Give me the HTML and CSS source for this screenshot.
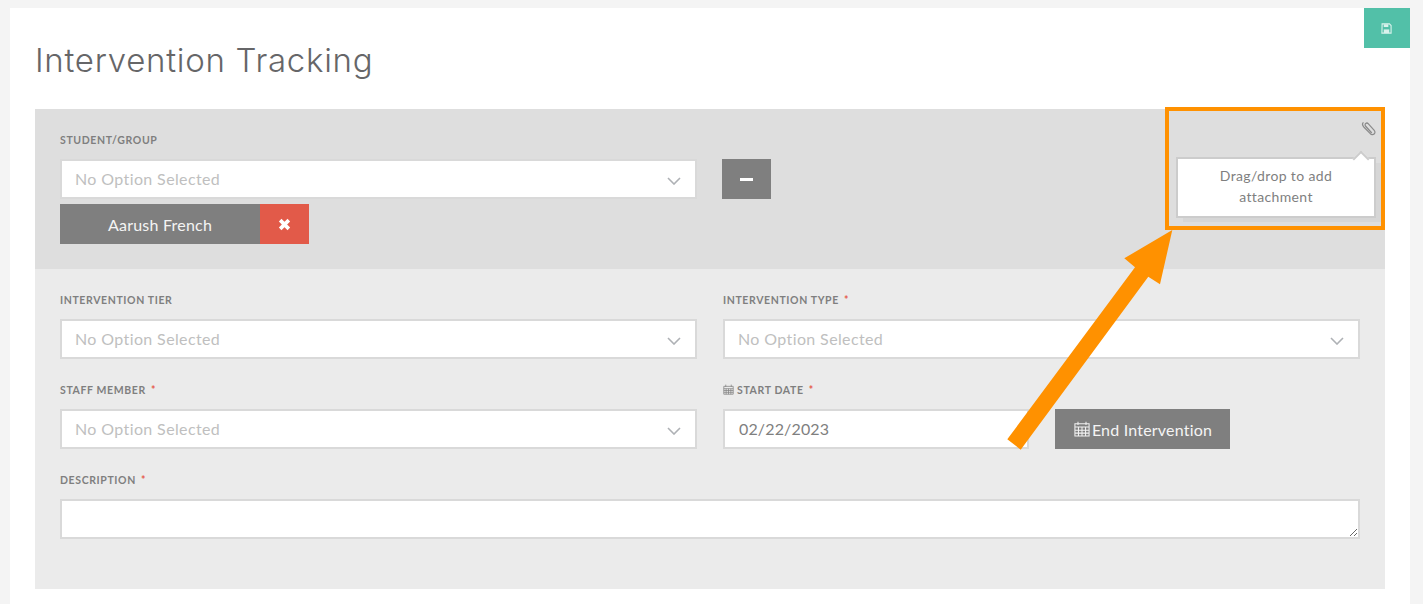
FILE: index.html
```html
<!DOCTYPE html>
<html lang="en">
<head>
<meta charset="utf-8">
<title>Intervention Tracking</title>
<link rel="stylesheet" href="styles.css">
</head>
<body>
<main class="card">
  <button class="save" type="button" aria-label="Save">
    <svg class="save-icon" viewBox="0 0 12 12"><path d="M1.2 1h8l1.8 1.8v8.2H1z" fill="none" stroke="#d9f2ec" stroke-width="1.2"/><path d="M3 1.400h5v3H3z" fill="#d9f2ec"/><path d="M3 7h6v4H3z" fill="#d9f2ec"/></svg>
  </button>
  <h1 class="title">Intervention Tracking</h1>

  <section class="panel panel-top">
    <div class="field">
      <label class="label">Student/Group</label>
      <div class="student-row">
        <div class="select"><span class="placeholder">No Option Selected</span><svg class="chev" viewBox="0 0 14 8"><path d="M1 1l6 6 6-6" fill="none" stroke="#aeb1b5" stroke-width="1.6"/></svg></div>
        <button class="minus" type="button" aria-label="Remove"><span class="minus-bar"></span></button>
      </div>
      <div class="chip">
        <span class="chip-name">Aarush French</span>
        <span class="chip-x"><svg class="x-icon" viewBox="0 0 12 12"><path d="M2 2l8 8M10 2l-8 8" stroke="#fff" stroke-width="3.4"/></svg></span>
      </div>
    </div>
    <svg class="clip" viewBox="0 0 16 16"><path d="M11.500 12.800L5 5.600c-.9-1-.8-2.200 0-2.900s2-.7 2.900.3l6 6.700c1.400 1.500 1.200 3.200.1 4.200s-2.800 1-4.100-.5L3 6.400C1.200 4.400 1.400 2.600 2.600 1.500" fill="none" stroke="#8a8a8a" stroke-width="1.300"/></svg>
    <div class="pop">Drag/drop to add attachment</div>
  </section>

  <section class="panel panel-form">
    <div class="grid">
      <div class="field">
        <label class="label">Intervention Tier</label>
        <div class="select"><span class="placeholder">No Option Selected</span><svg class="chev" viewBox="0 0 14 8"><path d="M1 1l6 6 6-6" fill="none" stroke="#aeb1b5" stroke-width="1.6"/></svg></div>
      </div>
      <div class="field">
        <label class="label">Intervention Type <span class="req">*</span></label>
        <div class="select"><span class="placeholder">No Option Selected</span><svg class="chev" viewBox="0 0 14 8"><path d="M1 1l6 6 6-6" fill="none" stroke="#aeb1b5" stroke-width="1.6"/></svg></div>
      </div>
      <div class="field">
        <label class="label">Staff Member <span class="req">*</span></label>
        <div class="select"><span class="placeholder">No Option Selected</span><svg class="chev" viewBox="0 0 14 8"><path d="M1 1l6 6 6-6" fill="none" stroke="#aeb1b5" stroke-width="1.6"/></svg></div>
      </div>
      <div class="field">
        <label class="label"><svg class="cal cal-small" viewBox="0 0 14 14"><path d="M1 3h12v10H1zM1 6h12M1 8.300h12M1 10.600h12M4 6v7M7 6v7M10 6v7M3.500 .8v3M10.500 .8v3" fill="none" stroke="#858585" stroke-width="1"/></svg>Start Date <span class="req">*</span></label>
        <div class="date-row">
          <div class="date">02/22/2023</div>
          <button class="end" type="button"><svg class="cal cal-big" viewBox="0 0 14 14"><path d="M.8 2.500h12.400v10.700H.8zM.8 5.300h12.400M.8 8h12.400M.8 10.600h12.400M3.900 5.300v7.900M7 5.300v7.900M10.100 5.300v7.900M3.500 .6v3M10.500 .6v3" fill="none" stroke="#f2f2f2" stroke-width=".9"/></svg>End Intervention</button>
        </div>
      </div>
      <div class="field field-wide">
        <label class="label">Description <span class="req">*</span></label>
        <textarea class="desc"></textarea>
      </div>
    </div>
  </section>

  <div class="note-box"></div>
  <svg class="note-arrow" viewBox="0 0 180 230"><polygon points="172.300,10 124.300,38.300 135,47.300 7.300,219.300 20.700,229.700 148.300,56.700 160,64.300" fill="#ff9100"/></svg>
</main>
</body>
</html>
```
FILE: styles.css
```css
* { box-sizing: border-box; }
html, body { height: 100%; margin: 0; overflow: hidden; }
body {
  background: #f4f4f4;
  padding: 8px 13px 0 10px;
  font-family: "Lato", "Liberation Sans", sans-serif;
  color: #7f7f7f;
}
.card {
  position: relative;
  background: #fff;
  height: 620px;
  padding: 0 25px;
}
.title {
  margin: 0;
  height: 101px;
  padding-top: 30px;
  font-family: "Inter", sans-serif;
  font-size: 33px;
  line-height: 44px;
  font-weight: 300;
  color: #666668;
  letter-spacing: 0.72px;
}
.save {
  position: absolute;
  top: 0;
  right: 0;
  width: 46px;
  height: 40px;
  border: 0;
  padding: 0;
  background: #52c0a8;
  display: flex;
  align-items: center;
  justify-content: center;
}
.save-icon { width: 11px; height: 11px; margin-left: -1px; }

.panel { padding-left: 25px; padding-right: 25px; }
.panel-top {
  position: relative;
  background: #dedede;
  height: 160px;
  padding-top: 21px;
}
.panel-form {
  background: #ebebeb;
  height: 320px;
  padding-top: 21px;
}
.label {
  display: block;
  height: 20px;
  margin-bottom: 9px;
  font-size: 10.5px;
  line-height: 20px;
  font-weight: 700;
  letter-spacing: 0.62px;
  text-transform: uppercase;
  color: #7f7f7f;
}
.req { color: #e5574a; margin-left: 2px; }
.student-row { display: grid; grid-template-columns: 637px 49px; column-gap: 25px; }
.select {
  display: flex;
  align-items: center;
  justify-content: space-between;
  height: 40px;
  padding: 0 14px 2px 13px;
  background: #fff;
  border: 2px solid #d9d9d9;
}
.placeholder {
  font-size: 16px;
  letter-spacing: 0.38px;
  color: #c0bfc0;
}
.chev { width: 14px; height: 8px; margin-top: 5px; }
.minus {
  width: 49px;
  height: 40px;
  border: 0;
  padding: 0;
  background: #7f7f7f;
  display: flex;
  align-items: center;
  justify-content: center;
}
.minus-bar { width: 13px; height: 3px; background: #fff; }
.chip { display: flex; height: 40px; margin-top: 5px; width: 249px; }
.chip-name {
  width: 200px;
  background: #7f7f7f;
  color: #f4f4f4;
  font-size: 16px;
  letter-spacing: 0.22px;
  line-height: 42px;
  text-align: center;
}
.chip-x {
  width: 49px;
  background: #e25a49;
  display: flex;
  align-items: center;
  justify-content: center;
}
.x-icon { width: 13px; height: 13px; }
.clip {
  position: absolute;
  top: 12px;
  right: 9px;
  width: 15px;
  height: 15px;
}
.pop {
  position: absolute;
  top: 48px;
  right: 9px;
  width: 200px;
  height: 61px;
  padding: 6px 30px 0;
  background: #fff;
  border: 2px solid #cccccc;
  box-shadow: 6px 5px 0 -1px #d6d6d6;
  font-size: 14px;
  line-height: 21px;
  letter-spacing: 0.36px;
  text-align: center;
  color: #7f7f7f;
}
.pop::before {
  content: "";
  position: absolute;
  top: -6px;
  right: 7px;
  width: 10px;
  height: 10px;
  background: #fff;
  border-top: 2px solid #cccccc;
  border-left: 2px solid #cccccc;
  transform: rotate(45deg);
}
.grid {
  display: grid;
  grid-template-columns: 637px 637px;
  column-gap: 26px;
  row-gap: 21px;
}
.field-wide { grid-column: 1 / -1; }
.date-row { display: flex; gap: 26px; }
.date {
  width: 306px;
  height: 40px;
  padding: 0 14px;
  background: #fff;
  border: 2px solid #d9d9d9;
  font-size: 16px;
  line-height: 36px;
  letter-spacing: 0.15px;
  color: #7f7f7f;
}
.end {
  width: 175px;
  height: 40px;
  border: 0;
  padding: 0 0 0 1px;
  background: #7f7f7f;
  color: #f4f4f4;
  font-family: inherit;
  font-size: 16px;
  letter-spacing: 0.2px;
  display: flex;
  align-items: center;
  justify-content: center;
}
.cal { vertical-align: -1px; }
.cal-small { width: 11px; height: 11px; margin-right: 3px; }
.cal-big { width: 16px; height: 16px; margin-right: 2px; }
.desc {
  display: block;
  width: 100%;
  height: 40px;
  background: #fff;
  border: 2px solid #d9d9d9;
  border-radius: 0;
  padding: 0;
  margin: 0;
  outline: 0;
}
.note-box {
  position: absolute;
  left: 1155px;
  top: 99px;
  width: 220px;
  height: 123px;
  border: 4px solid #ff9100;
}
.note-arrow {
  position: absolute;
  left: 990px;
  top: 212px;
  width: 180px;
  height: 230px;
}
```
